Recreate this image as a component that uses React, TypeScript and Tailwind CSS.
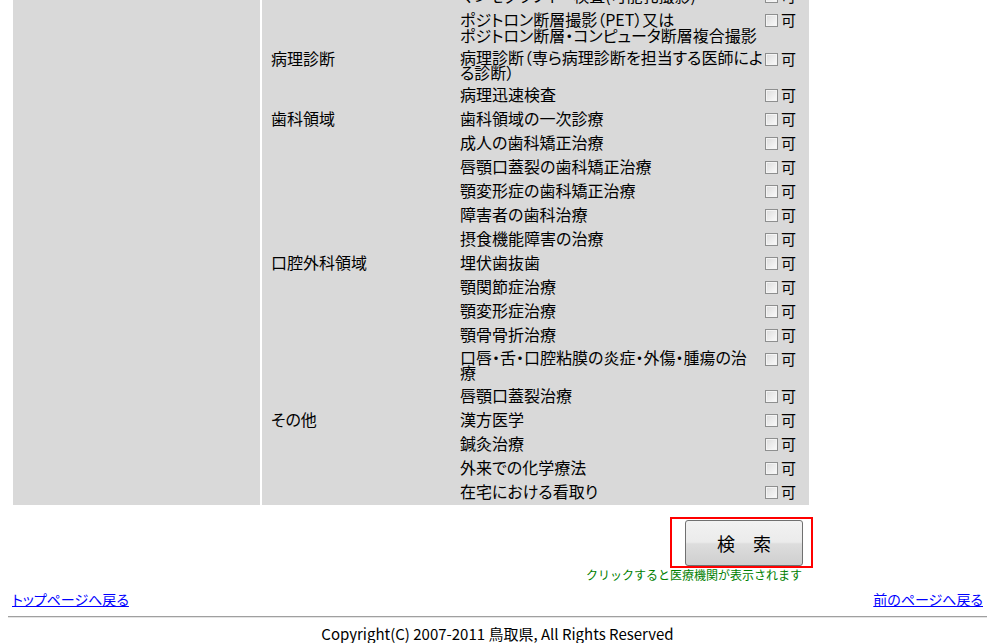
import React from "react";

type Row = {
  cat?: string;
  lines: string[];
  h?: string;
  lead?: string;
};

const rows: Row[] = [
  { lines: ["マンモグラフィー検査(可能乳撮影)"] },
  { lines: ["ポジトロン断層撮影（PET）又は", "ポジトロン断層・コンピュータ断層複合撮影"], h: "h-[39px]", lead: "leading-[16px]" },
  { cat: "病理診断", lines: ["病理診断（専ら病理診断を担当する医師によ", "る診断）"], h: "h-[36px]", lead: "leading-[15px]" },
  { lines: ["病理迅速検査"] },
  { cat: "歯科領域", lines: ["歯科領域の一次診療"] },
  { lines: ["成人の歯科矯正治療"] },
  { lines: ["唇顎口蓋裂の歯科矯正治療"] },
  { lines: ["顎変形症の歯科矯正治療"] },
  { lines: ["障害者の歯科治療"] },
  { lines: ["摂食機能障害の治療"] },
  { cat: "口腔外科領域", lines: ["埋伏歯抜歯"] },
  { lines: ["顎関節症治療"] },
  { lines: ["顎変形症治療"] },
  { lines: ["顎骨骨折治療"] },
  { lines: ["口唇・舌・口腔粘膜の炎症・外傷・腫瘍の治", "療"], h: "h-[37px]", lead: "leading-[15px]" },
  { lines: ["唇顎口蓋裂治療"] },
  { cat: "その他", lines: ["漢方医学"] },
  { lines: ["鍼灸治療"] },
  { lines: ["外来での化学療法"] },
  { lines: ["在宅における看取り"] },
];

const CheckBox = () => (
  <span className="inline-block w-[13px] h-[13px] border border-[#8e8f8f] bg-gradient-to-br from-[#dcdcdc] to-[#fbfbfb] shadow-[inset_0_0_0_1px_#f4f4f4]" />
);

const App = () => {
  return (
    <div
      className="w-[1007px] h-[643px] overflow-hidden bg-white text-black"
      style={{ fontFamily: '"Noto Sans CJK JP", "Noto Sans", sans-serif' }}
    >
      {/* table, scrolled so the top row is cut */}
      <div className="flex ml-[13px] w-[796px] -mt-[16px] text-[16px]">
        <div className="w-[247px] bg-[#d9d9d9]" />
        <div className="w-[2px] bg-white" />
        <div className="flex-1 bg-[#d9d9d9] pb-[1px]">
          {rows.map((r, i) => (
            <div key={i} className={`flex items-start ${r.h ?? "h-[24px]"}`}>
              <div className="w-[198px] pl-[9px] pt-[3px] leading-[16px] whitespace-nowrap [font-feature-settings:'palt']">
                {r.cat ?? ""}
              </div>
              <div
                className={`w-[305px] pt-[3px] whitespace-nowrap [font-feature-settings:'palt'] ${r.lead ?? "leading-[16px]"}`}
              >
                {r.lines.map((l, j) => (
                  <div key={j}>{l}</div>
                ))}
              </div>
              <div className="flex items-center h-[24px] gap-[3px]">
                <CheckBox />
                <span className="leading-[16px] text-[15px]">可</span>
              </div>
            </div>
          ))}
        </div>
      </div>

      {/* search button */}
      <div className="flex justify-end w-[813px] mt-[12px]">
        <div className="border-2 border-[#ff0000] w-[143px] h-[51px] pl-[13px] pt-[1px]">
          <button className="w-[118px] h-[46px] rounded-[3px] border border-[#707070] bg-[linear-gradient(#f2f2f2_0%,#ebebeb_48%,#dddddd_52%,#cfcfcf_100%)] text-[18px] leading-none">
            検　索
          </button>
        </div>
      </div>
      <div className="flex justify-end w-[802px] text-[12px] leading-[14px] text-[#008000]">
        クリックすると医療機関が表示されます
      </div>

      {/* links */}
      <div className="flex justify-between pl-[12px] pr-[24px] mt-[9px] text-[14px] leading-[16px] [font-feature-settings:'palt']">
        <a href="#" className="text-[#0000ff] underline">トップページへ戻る</a>
        <a href="#" className="text-[#0000ff] underline">前のページへ戻る</a>
      </div>

      <div className="ml-[8px] w-[979px] mt-[9px] border-t border-b border-t-[#a0a0a0] border-b-[#e4e4e4]" />

      <div className="w-[995px] text-center text-[15px] leading-[16px] mt-[8px]">
        Copyright(C) 2007-2011 鳥取県, All Rights Reserved
      </div>
    </div>
  );
};

export default App;
